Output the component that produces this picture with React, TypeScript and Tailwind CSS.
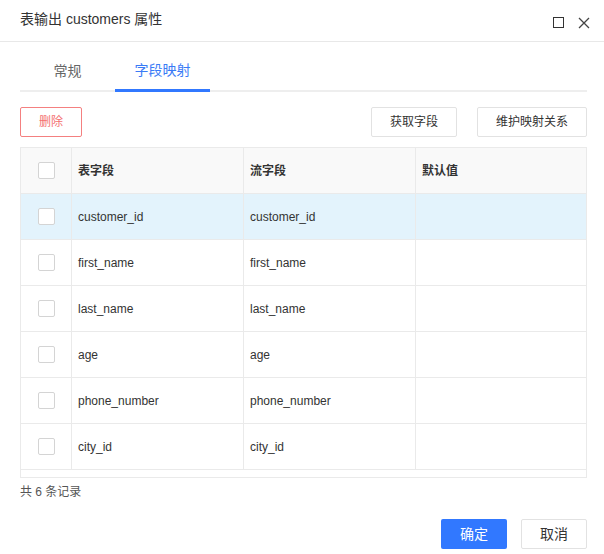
import React from "react";

const rows = [
  ["customer_id", "customer_id"],
  ["first_name", "first_name"],
  ["last_name", "last_name"],
  ["age", "age"],
  ["phone_number", "phone_number"],
  ["city_id", "city_id"],
];

function Checkbox() {
  return <div className="w-[17px] h-[17px] border border-[#d4d4d4] rounded-[2px] bg-white" />;
}

export default function App() {
  return (
    <div
      className="w-[604px] h-[554px] bg-white text-[#333] relative"
      style={{ fontFamily: '"Liberation Sans", "Noto Sans CJK SC", Arial, sans-serif' }}
    >
      <div className="h-[42px] border-b border-[#e8e8e8] flex items-center pl-5 pr-[14px]">
        <div className="text-[14px] text-[#333] flex-1 -mt-[2px]">表输出 customers 属性</div>
        <div className="flex items-center gap-[14px] mt-[4px]">
          <div className="w-[11px] h-[11px] border-[1.5px] border-[#333]" />
          <svg width="12" height="12" viewBox="0 0 12 12">
            <path d="M1 1 L11 11 M11 1 L1 11" stroke="#444" strokeWidth="1.3" fill="none" />
          </svg>
        </div>
      </div>

      <div className="pl-5 pr-[17px]">
        <div className="flex h-[50px] border-b-2 border-[#eeeeee] mt-0">
          <div className="w-[95px] flex items-center justify-center text-[14px] text-[#666] pt-[10px]">常规</div>
          <div className="w-[95px] flex items-center justify-center text-[14px] text-[#3a7bf6] pt-[10px] border-b-[3px] border-[#3178ff] -mb-[2px]">
            字段映射
          </div>
        </div>

        <div className="flex items-center mt-[15px] h-[30px]">
          <button className="w-[62px] h-[30px] border border-[#f48080] rounded-[2px] text-[12px] text-[#f47070]">删除</button>
          <div className="flex-1" />
          <button className="w-[86px] h-[30px] border border-[#e2e2e2] rounded-[2px] text-[12px] text-[#333]">获取字段</button>
          <button className="w-[110px] h-[30px] ml-[20px] border border-[#e2e2e2] rounded-[2px] text-[12px] text-[#333]">维护映射关系</button>
        </div>

        <div className="mt-[10px] border border-[#eaeaea] h-[331px]">
          <div className="grid grid-cols-[51px_172px_172px_1fr] h-[46px] bg-[#f9f9f9] border-b border-[#eaeaea] text-[12px] font-bold text-[#333]">
            <div className="flex items-center justify-center border-r border-[#eaeaea]"><Checkbox /></div>
            <div className="flex items-center pl-[6px] border-r border-[#eaeaea]">表字段</div>
            <div className="flex items-center pl-[6px] border-r border-[#eaeaea]">流字段</div>
            <div className="flex items-center pl-[6px]">默认值</div>
          </div>
          {rows.map((r, i) => (
            <div
              key={i}
              className={`grid grid-cols-[51px_172px_172px_1fr] h-[46px] border-b border-[#eaeaea] text-[12px] text-[#333] ${i === 0 ? "bg-[#e3f3fc]" : "bg-white"}`}
            >
              <div className="flex items-center justify-center border-r border-[#eaeaea]"><Checkbox /></div>
              <div className="flex items-center pl-[6px] border-r border-[#eaeaea]">{r[0]}</div>
              <div className="flex items-center pl-[6px] border-r border-[#eaeaea]">{r[1]}</div>
              <div className="flex items-center pl-[6px]"></div>
            </div>
          ))}
        </div>

        <div className="text-[12px] text-[#555] mt-[5px]">共 6 条记录</div>

        <div className="flex justify-end gap-[14px] mt-[18px]">
          <button className="w-[66px] h-[30px] bg-[#3178ff] rounded-[2px] text-[14px] text-white">确定</button>
          <button className="w-[66px] h-[30px] border border-[#e2e2e2] rounded-[2px] text-[14px] text-[#333]">取消</button>
        </div>
      </div>
    </div>
  );
}
